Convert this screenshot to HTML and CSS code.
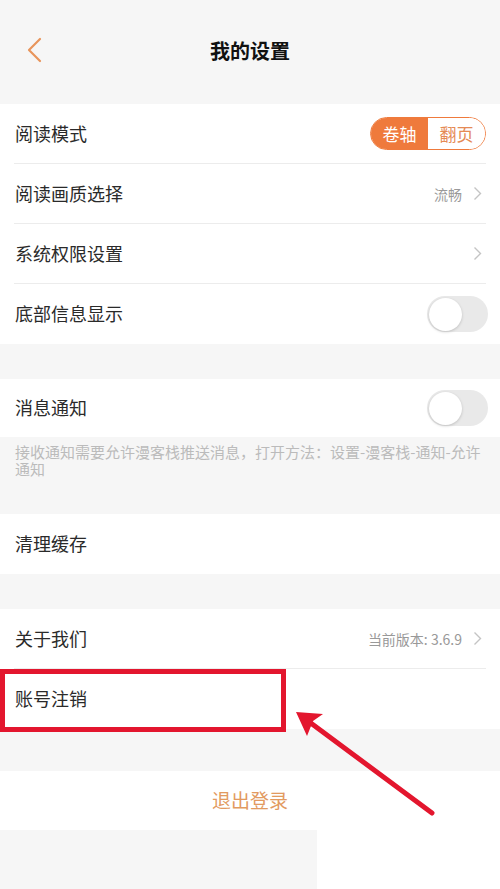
FILE: index.html
```html
<!DOCTYPE html>
<html lang="zh-CN">
  <head>
    <meta charset="UTF-8" />
    <title>我的设置</title>
    <link rel="stylesheet" href="styles.css">
  </head>
  <body>
    <div class="page">
      <header class="topbar">
        <svg class="back" width="18" height="26" viewBox="0 0 18 26">
          <path d="M15 2 L4 13 L15 24" fill="none" stroke="#e8955c" stroke-width="2.2" stroke-linecap="round" stroke-linejoin="round"/>
        </svg>
        <h1>我的设置</h1>
      </header>

      <section class="group">
        <div class="row">
          <span class="label">阅读模式</span>
          <div class="segment">
            <span class="seg on">卷轴</span>
            <span class="seg">翻页</span>
          </div>
        </div>
        <div class="row">
          <span class="label">阅读画质选择</span>
          <span class="value">流畅</span>
          <svg class="chev" width="9" height="15" viewBox="0 0 9 15"><path d="M1.5 1.5 L7.5 7.5 L1.5 13.5" fill="none" stroke="#c4c4c4" stroke-width="1.4"/></svg>
        </div>
        <div class="row">
          <span class="label">系统权限设置</span>
          <svg class="chev" width="9" height="15" viewBox="0 0 9 15"><path d="M1.5 1.5 L7.5 7.5 L1.5 13.5" fill="none" stroke="#c4c4c4" stroke-width="1.4"/></svg>
        </div>
        <div class="row">
          <span class="label">底部信息显示</span>
          <span class="switch"><span class="knob"></span></span>
        </div>
      </section>

      <section class="group gap">
        <div class="row short">
          <span class="label">消息通知</span>
          <span class="switch"><span class="knob"></span></span>
        </div>
      </section>
      <p class="note">接收通知需要允许漫客栈推送消息，打开方法：设置-漫客栈-通知-允许通知</p>

      <section class="group">
        <div class="row">
          <span class="label">清理缓存</span>
        </div>
      </section>

      <section class="group gap">
        <div class="row">
          <span class="label">关于我们</span>
          <span class="value">当前版本: 3.6.9</span>
          <svg class="chev" width="9" height="15" viewBox="0 0 9 15"><path d="M1.5 1.5 L7.5 7.5 L1.5 13.5" fill="none" stroke="#c4c4c4" stroke-width="1.4"/></svg>
        </div>
        <div class="row">
          <span class="label">账号注销</span>
        </div>
      </section>

      <section class="group logout">
        <span>退出登录</span>
      </section>

      <div class="bottom">
        <div class="bottom-gray"></div>
      </div>

      <svg class="mark" width="500" height="889" viewBox="0 0 500 889">
        <rect x="2.5" y="671.5" width="281" height="58" fill="none" stroke="#e3162e" stroke-width="5"/>
        <line x1="432" y1="813" x2="304" y2="718" stroke="#e3162e" stroke-width="5" stroke-linecap="round"/>
        <polygon points="296,712 323,714 313,721 307,736" fill="#e3162e"/>
      </svg>
    </div>
  </body>
</html>
```

FILE: styles.css
```css
:root {
  --orange: #ef7a3c;
  --text: #222;
  --gray-bg: #f6f6f6;
}

body {
  margin: 0;
  background: var(--gray-bg);
  font-family: "Noto Sans CJK SC", "Noto Sans", sans-serif;
  color: var(--text);
}

.page {
  position: relative;
  width: 500px;
  height: 889px;
  overflow: hidden;
}

.topbar {
  height: 104px;
  display: flex;
  align-items: center;
  justify-content: center;
  position: relative;
}

.topbar h1 {
  margin: 0 0 4px;
  font-size: 20px;
  font-weight: 700;
  color: #111;
}

.back {
  position: absolute;
  left: 25px;
  top: 37px;
}

.group {
  background: #fff;
}

.group.gap {
  margin-top: 35px;
}

.row {
  height: 60px;
  box-sizing: border-box;
  margin: 0 14px;
  padding-left: 1px;
  display: flex;
  align-items: center;
  border-bottom: 1px solid #ececec;
}

.row:last-child {
  border-bottom: none;
}

.row.short {
  height: 58px;
}

.label {
  flex: 1;
  font-size: 18px;
  margin-bottom: 2px;
  color: #2a2a2a;
}

.value {
  font-size: 14px;
  color: #999;
  margin-right: 11px;
}

.chev {
  margin-right: 4px;
}

.segment {
  display: flex;
  height: 33px;
  width: 116px;
  box-sizing: border-box;
  border: 1px solid var(--orange);
  border-radius: 17px;
  overflow: hidden;
}

.seg {
  flex: 1;
  display: flex;
  align-items: center;
  justify-content: center;
  font-size: 17px;
  color: #e58a55;
  background: #fff;
}

.seg.on {
  background: var(--orange);
  color: #fff;
}

.switch {
  width: 61px;
  height: 36px;
  border-radius: 18px;
  background: #e9e9e9;
  display: flex;
  align-items: center;
  padding: 0 2px;
  box-sizing: border-box;
  margin-right: -2px;
}

.knob {
  width: 33px;
  height: 33px;
  border-radius: 50%;
  background: #fff;
  box-shadow: 0 1px 3px rgba(0, 0, 0, 0.18);
}

.note {
  margin: 0;
  height: 77px;
  box-sizing: border-box;
  padding: 6px 18px 0 15px;
  font-size: 15px;
  line-height: 17px;
  color: #bbb;
}

.logout {
  margin-top: 42px;
  height: 59px;
  display: flex;
  align-items: center;
  justify-content: center;
}

.logout span {
  font-size: 19px;
  color: #e29a60;
  margin-bottom: 2px;
}

.bottom {
  height: 59px;
  background: #fff;
}

.bottom-gray {
  width: 317px;
  height: 100%;
  background: var(--gray-bg);
}

.mark {
  position: absolute;
  left: 0;
  top: 0;
  pointer-events: none;
}
```
